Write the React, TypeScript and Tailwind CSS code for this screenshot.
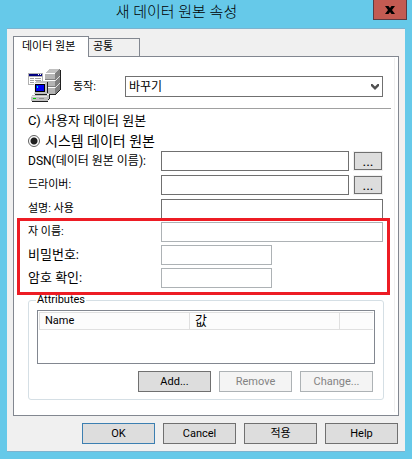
import React from "react";

const field = "h-5 min-w-0 border bg-white px-1 text-xs outline-none";
const rowClass = "flex items-center";
const labelBase = "w-[133px] shrink-0 whitespace-nowrap leading-5";

function DataSourceIcon() {
  return (
    <svg width="34" height="34" viewBox="0 0 34 34" shapeRendering="crispEdges" aria-hidden="true">
      <path d="M17 5l5-4h10v21l-5 4H17z" fill="#808080" />
      <path d="M17 5l5-4h10l-5 4z" fill="#c0c0c0" />
      <path d="M17 5h10v21H17z" fill="#b4b4b4" />
      <path d="M17 5h10v1H17zM17 12h10v1H17zM17 19h10v1H17z" fill="#fff" />
      <path d="M17 11h10v1H17zM17 18h10v1H17z" fill="#808080" />
      <path d="M27 12l5-4v1l-5 4zM27 19l5-4v1l-5 4z" fill="#e0e0e0" />
      <path d="M32 2h1v20h-1zM31 22h1v1h-1zM30 23h1v1h-1zM29 24h1v1h-1zM28 25h1v1h-1zM21 26h7v1h-7z" fill="#202020" />
      <path d="M0 5h15v12H0z" fill="#b0b0b0" />
      <path d="M1 6h13v2H1z" fill="#000080" />
      <path d="M10 6h1v1h-1zM12 6h1v1h-1z" fill="#fff" />
      <path d="M1 9h13v7H1z" fill="#fff" />
      <path d="M2 10h4v1H2zM7 10h6v1H7zM2 12h4v1H2zM7 12h6v1H7zM2 14h4v1H2z" fill="#a0a0a0" />
      <path d="M6 15l2-2h11v12l-1 1H6z" fill="#c0c0c0" />
      <path d="M6 15h11v1H6zM6 15h1v10H6z" fill="#f0f0f0" />
      <path d="M7 16h10v8H7z" fill="#000" />
      <path d="M8 17h8v6H8z" fill="#0000f0" />
      <path d="M9 18h1v2H9z" fill="#00e8ff" />
      <path d="M19 14h1v11h-1zM7 26h12v1H7z" fill="#202020" />
      <path d="M3 28l2-1h16v4l-2 2H3z" fill="#c0c0c0" />
      <path d="M3 28h16v1H3z" fill="#e8e8e8" />
      <path d="M5 30h3v1H5z" fill="#00d000" />
      <path d="M11 30h5v1h-5z" fill="#909090" />
      <path d="M21 27h1v4h-1zM20 31h1v1h-1zM4 33h16v1H4z" fill="#202020" />
    </svg>
  );
}

function BrowseButton({ label }: { label: string }) {
  return (
    <div className="ml-1 bg-[#f0f0f0] p-px">
      <button
        type="button"
        aria-label={label}
        className="flex h-[18px] w-7 items-center justify-center border border-[#707070] bg-[#dddddd] text-sm leading-4 text-black"
      >
        ...
      </button>
    </div>
  );
}

function PushButton({
  children,
  disabled = false,
  primary = false,
}: {
  children: React.ReactNode;
  disabled?: boolean;
  primary?: boolean;
}) {
  const tone = disabled
    ? "border-[#adb2b5] bg-[#f4f4f4] text-[#838383]"
    : primary
      ? "border-[#3c7fb1] bg-[#dddddd]"
      : "border-[#707070] bg-[#dddddd]";
  return (
    <button type="button" disabled={disabled} className={`h-[21px] w-[73px] border text-[11px] leading-[18px] ${tone}`}>
      {children}
    </button>
  );
}

export default function App() {
  return (
    <div className="min-h-screen bg-[#66c9e9] px-[7px] pb-[7px] font-[Roboto,'Noto_Sans_CJK_KR',sans-serif] text-[11px] text-black">
      <header className="-mr-[2px] flex h-7 items-start">
        <h1 className="flex-1 pr-[27px] text-center text-[15px] leading-6 font-light">새 데이터 원본 속성</h1>
        <button
          type="button"
          aria-label="닫기"
          className="flex h-5 w-[34px] items-center justify-center border border-t-0 border-[#5b3b42] bg-[#c35b52]"
        >
          <svg width="10" height="8" viewBox="0 0 10 8" aria-hidden="true">
            <path d="M0 0h3.500L5 2l1.500-2H10L7 4l3 4H6.500L5 6 3.500 8H0l3-4z" fill="#000" />
          </svg>
        </button>
      </header>

      <main className="border-y border-[#7db3cf] bg-[#f0f0f0] pt-[7px] pr-[6px] pb-[7px] pl-[6px]">
        <div role="tablist" className="relative -mb-px flex items-end">
          <button
            type="button"
            role="tab"
            aria-selected="true"
            className="h-[21px] w-[76px] border border-b-0 border-[#828790] bg-white pl-2 text-left leading-4 whitespace-nowrap"
          >
            데이터 원본
          </button>
          <button
            type="button"
            role="tab"
            aria-selected="false"
            className="mb-px h-[18px] w-[51px] border border-b-0 border-l-0 border-[#828790] bg-[#f0f0f0] pb-px pl-1 text-left leading-4"
          >
            공통
          </button>
        </div>

        <section className="border border-[#828790] bg-white pt-px pr-[3px] pb-[3px]">
          <div className="border-r border-[#f0f0f0] pb-3 pl-[3px] pr-[3px]">
            <div className="flex items-center pt-[10px] pr-2 pl-[11px]">
              <DataSourceIcon />
              <label htmlFor="action" className="w-[63px] pt-[3px] pl-[11px] leading-5">
                동작:
              </label>
              <div className="grid min-w-0 flex-1 items-center pt-[3px]">
                <select
                  id="action"
                  className="col-start-1 row-start-1 h-[21px] w-full appearance-none border border-[#707070] bg-white pl-[3px] text-xs leading-[18px]"
                >
                  <option>바꾸기</option>
                </select>
                <svg
                  className="pointer-events-none col-start-1 row-start-1 mr-1 justify-self-end"
                  width="8"
                  height="6"
                  viewBox="0 0 8 6"
                  aria-hidden="true"
                >
                  <path d="M0 0h1.500L4 2.500 6.500 0H8v2L4 6 0 2z" fill="#505050" />
                </svg>
              </div>
            </div>

            <hr className="mt-[6px] border-t border-[#a0a0a0]" />

            <div className="flex flex-col pt-[2px] pl-[11px]">
              <label className="flex h-5 items-center text-[13px] leading-5">
                <input type="radio" name="scope" className="h-0 w-0 appearance-none" />
                C) 사용자 데이터 원본
              </label>
              <label className="flex h-5 items-center gap-[5px] text-sm leading-5">
                <input
                  type="radio"
                  name="scope"
                  defaultChecked
                  className="h-3 w-3 appearance-none rounded-full border border-[#606060] bg-white bg-[radial-gradient(circle,#202020_0_3px,#ffffff_4px)]"
                />
                시스템 데이터 원본
              </label>
            </div>

            <div className="flex flex-col gap-1 pr-2 pl-[11px]">
              <div className={rowClass}>
                <label htmlFor="dsn" className={`${labelBase} text-xs`}>
                  DSN(데이터 원본 이름):
                </label>
                <input id="dsn" className={`${field} flex-1 border-[#707070]`} />
                <BrowseButton label="DSN 찾아보기" />
              </div>
              <div className={rowClass}>
                <label htmlFor="driver" className={labelBase}>
                  드라이버:
                </label>
                <input id="driver" className={`${field} flex-1 border-[#707070]`} />
                <BrowseButton label="드라이버 찾아보기" />
              </div>
              <div className={rowClass}>
                <label htmlFor="description" className={labelBase}>
                  설명: 사용
                </label>
                <input id="description" className={`${field} flex-1 border-[#707070]`} />
              </div>
            </div>

            <div className="relative -mt-px mr-px flex flex-col gap-[3px] border-[3px] border-[#ed1c24] bg-white pt-px pr-1 pb-1 pl-2">
              <div className={rowClass}>
                <label htmlFor="user" className={labelBase}>
                  자 이름:
                </label>
                <input id="user" disabled className={`${field} flex-1 border-[#adb2b5]`} />
              </div>
              <div className={rowClass}>
                <label htmlFor="password" className={`${labelBase} text-[13px]`}>
                  비밀번호:
                </label>
                <input id="password" type="password" disabled className={`${field} w-[111px] border-[#adb2b5]`} />
              </div>
              <div className={rowClass}>
                <label htmlFor="confirm" className={`${labelBase} text-[13px]`}>
                  암호 확인:
                </label>
                <input id="confirm" type="password" disabled className={`${field} w-[111px] border-[#adb2b5]`} />
              </div>
            </div>

            <fieldset className="relative mr-[7px] ml-[11px] rounded-[3px] border border-[#d5dfe5] px-2 pb-[7px]">
              <legend className="-ml-px px-px leading-[10px]">Attributes</legend>
              <div className="mt-[5px] h-[54px] border border-[#828790] bg-white p-px">
                <table className="w-full table-fixed border-collapse bg-[#fcfcfc] text-xs">
                  <thead>
                    <tr className="h-[17px] border border-r-0 border-[#e0e0e0]">
                      <th className="w-[150px] border-r border-[#e0e0e0] p-0 pl-[5px] text-left text-[11px] leading-4 font-normal">
                        Name
                      </th>
                      <th className="w-[150px] border-r border-[#e0e0e0] p-0 pl-[5px] text-left text-[13px] leading-4 font-normal">
                        값
                      </th>
                      <th className="p-0" />
                    </tr>
                  </thead>
                </table>
              </div>
              <div className="mt-[7px] flex justify-end gap-2 pr-[2px]">
                <PushButton>Add...</PushButton>
                <PushButton disabled>Remove</PushButton>
                <PushButton disabled>Change...</PushButton>
              </div>
            </fieldset>
          </div>
        </section>

        <footer className="flex justify-end gap-2 pt-[7px] pr-px">
          <PushButton primary>OK</PushButton>
          <PushButton>Cancel</PushButton>
          <PushButton>적용</PushButton>
          <PushButton>Help</PushButton>
        </footer>
      </main>
    </div>
  );
}
